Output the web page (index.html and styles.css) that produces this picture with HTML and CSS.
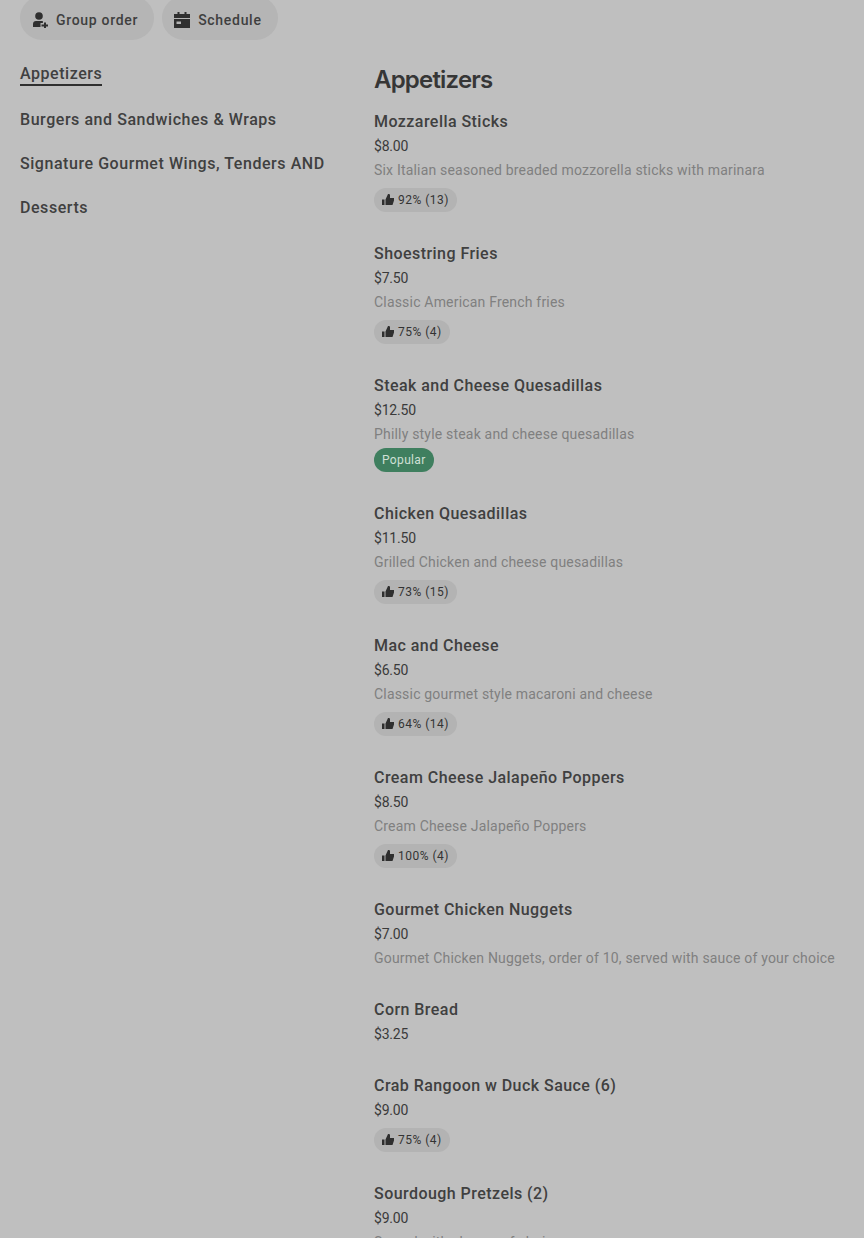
FILE: index.html
```html
<!DOCTYPE html>
<html lang="en">
<head>
  <meta charset="UTF-8" />
  <meta name="viewport" content="width=device-width, initial-scale=1.0"/>
  <title>Menu</title>
  <link rel="stylesheet" href="styles.css">
</head>
<body>

<div class="actions">
  <button class="pill-btn">
    <svg class="btn-icon" viewBox="0 0 16 16"><circle cx="7" cy="4" r="3.800"/><path d="M1 15v-3c0-1.800 1.200-3 3-3h5.500c.5 0 1 .1 1.400.3V11H8.500v4H1z"/><path d="M12 10.500h2v2h2v2h-2v1.500h-2v-1.500H9.500v-2H12z"/></svg>
    Group order
  </button>
  <button class="pill-btn">
    <svg class="btn-icon" viewBox="0 0 16 16"><path d="M3.500 0h2v2h5V0h2v2H16v4H0V2h3.500z"/><path d="M0 7h16v9H0zm2.500 2.500V12H7V9.500z" fill-rule="evenodd"/></svg>
    Schedule
  </button>
</div>

<div class="layout">
  <nav class="side-nav">
    <a class="nav-link active">Appetizers</a>
    <a class="nav-link">Burgers and Sandwiches &amp; Wraps</a>
    <a class="nav-link">Signature Gourmet Wings, Tenders AND</a>
    <a class="nav-link">Desserts</a>
  </nav>

  <main class="menu">
    <h2>Appetizers</h2>

    <div class="item">
      <div class="name">Mozzarella Sticks</div>
      <div class="price">$8.00</div>
      <div class="desc">Six Italian seasoned breaded mozzorella sticks with marinara</div>
      <div class="rating"><svg class="thumb" viewBox="0 0 12 12"><path d="M0 5.500h2.500V11H0zM3.500 5.500 6 0h.8c.8 0 1.200.6 1.200 1.300V4h4v2.500L10.500 11h-7z"/></svg>92% (13)</div>
    </div>

    <div class="item">
      <div class="name">Shoestring Fries</div>
      <div class="price">$7.50</div>
      <div class="desc">Classic American French fries</div>
      <div class="rating"><svg class="thumb" viewBox="0 0 12 12"><path d="M0 5.500h2.500V11H0zM3.500 5.500 6 0h.8c.8 0 1.200.6 1.200 1.300V4h4v2.500L10.500 11h-7z"/></svg>75% (4)</div>
    </div>

    <div class="item">
      <div class="name">Steak and Cheese Quesadillas</div>
      <div class="price">$12.50</div>
      <div class="desc">Philly style steak and cheese quesadillas</div>
      <div class="popular">Popular</div>
    </div>

    <div class="item">
      <div class="name">Chicken Quesadillas</div>
      <div class="price">$11.50</div>
      <div class="desc">Grilled Chicken and cheese quesadillas</div>
      <div class="rating"><svg class="thumb" viewBox="0 0 12 12"><path d="M0 5.500h2.500V11H0zM3.500 5.500 6 0h.8c.8 0 1.200.6 1.200 1.300V4h4v2.500L10.500 11h-7z"/></svg>73% (15)</div>
    </div>

    <div class="item">
      <div class="name">Mac and Cheese</div>
      <div class="price">$6.50</div>
      <div class="desc">Classic gourmet style macaroni and cheese</div>
      <div class="rating"><svg class="thumb" viewBox="0 0 12 12"><path d="M0 5.500h2.500V11H0zM3.500 5.500 6 0h.8c.8 0 1.200.6 1.200 1.300V4h4v2.500L10.500 11h-7z"/></svg>64% (14)</div>
    </div>

    <div class="item">
      <div class="name">Cream Cheese Jalapeño Poppers</div>
      <div class="price">$8.50</div>
      <div class="desc">Cream Cheese Jalapeño Poppers</div>
      <div class="rating"><svg class="thumb" viewBox="0 0 12 12"><path d="M0 5.500h2.500V11H0zM3.500 5.500 6 0h.8c.8 0 1.200.6 1.200 1.300V4h4v2.500L10.500 11h-7z"/></svg>100% (4)</div>
    </div>

    <div class="item">
      <div class="name">Gourmet Chicken Nuggets</div>
      <div class="price">$7.00</div>
      <div class="desc">Gourmet Chicken Nuggets, order of 10, served with sauce of your choice</div>
    </div>

    <div class="item">
      <div class="name">Corn Bread</div>
      <div class="price">$3.25</div>
    </div>

    <div class="item">
      <div class="name">Crab Rangoon w Duck Sauce (6)</div>
      <div class="price">$9.00</div>
      <div class="rating"><svg class="thumb" viewBox="0 0 12 12"><path d="M0 5.500h2.500V11H0zM3.500 5.500 6 0h.8c.8 0 1.200.6 1.200 1.300V4h4v2.500L10.500 11h-7z"/></svg>75% (4)</div>
    </div>

    <div class="item">
      <div class="name">Sourdough Pretzels (2)</div>
      <div class="price">$9.00</div>
      <div class="desc">Served with cheese of choice</div>
    </div>
  </main>
</div>

</body>
</html>
```
FILE: styles.css
```css
html, body {
  height: 100%;
  overflow: hidden;
}
body {
  font-family: 'Roboto', 'Liberation Sans', sans-serif;
  background: #bfbfbf;
  color: #2f2f2f;
  margin: 0;
  padding: 0 20px;
}
.actions {
  display: flex;
  gap: 8px;
  margin-top: -4px;
}
.pill-btn {
  display: flex;
  align-items: center;
  gap: 8px;
  height: 44px;
  padding: 4px 16px 0 12px;
  border: none;
  border-radius: 22px;
  background: #b5b5b5;
  color: #3f3f3f;
  font-family: inherit;
  font-size: 14px;
  font-weight: 500;
  letter-spacing: 0.7px;
}
.btn-icon {
  width: 16px;
  height: 16px;
  fill: #2f2f2f;
}
.layout {
  display: flex;
  margin-top: 22px;
}
.side-nav {
  width: 354px;
  flex-shrink: 0;
  display: flex;
  flex-direction: column;
  align-items: flex-start;
  gap: 20px;
}
.nav-link {
  font-size: 16px;
  font-weight: 500;
  line-height: 24px;
  letter-spacing: 0.55px;
  color: #404040;
}
.nav-link.active {
  margin-bottom: 2px;
  box-shadow: inset 0 -2px 0 #2f2f2f;
}
h2 {
  margin: 0;
  font-family: 'Inter', sans-serif;
  font-size: 24px;
  font-weight: 600;
  line-height: 36px;
  letter-spacing: -0.8px;
  color: #363636;
}
.menu {
  flex: 1;
  min-width: 0;
}
.item {
  padding-bottom: 27px;
}
.menu h2 + .item {
  margin-top: 11px;
}
.name {
  font-size: 16px;
  font-weight: 500;
  line-height: 25px;
  letter-spacing: 0.45px;
  color: #404040;
}
.price {
  font-size: 14px;
  line-height: 24px;
  letter-spacing: -0.2px;
  color: #3a3a3a;
}
.desc {
  font-size: 14px;
  line-height: 24px;
  letter-spacing: 0.19px;
  color: #808080;
  white-space: nowrap;
}
.rating {
  display: flex;
  align-items: center;
  gap: 4px;
  width: fit-content;
  height: 24px;
  margin: 6px 0 2px;
  padding: 0 8px;
  border-radius: 12px;
  background: #b3b3b3;
  font-size: 12px;
  letter-spacing: 0.5px;
  color: #333;
}
.thumb {
  width: 12px;
  height: 12px;
  fill: #2f2f2f;
}
.popular {
  width: fit-content;
  height: 24px;
  line-height: 24px;
  margin: 2px 0;
  padding: 0 8px;
  border-radius: 12px;
  background: #3f7f5f;
  color: #cfe0d6;
  font-size: 12px;
  letter-spacing: 0.35px;
}
```
